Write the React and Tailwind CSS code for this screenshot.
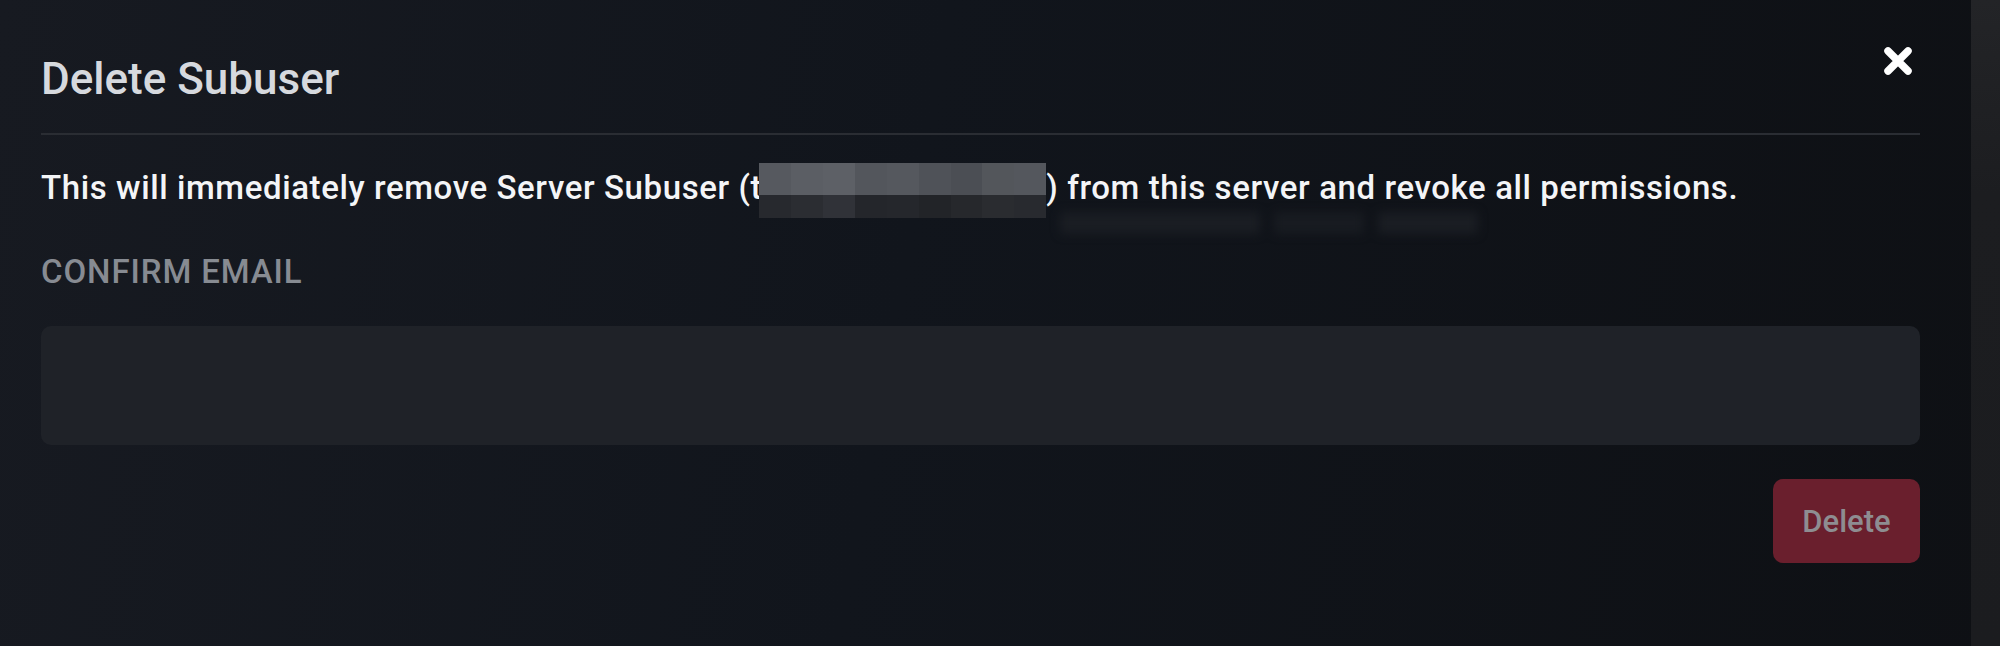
const MOSAIC_TOP = ['#56595f', '#5b5e64', '#5d6066', '#53565c', '#55585e', '#4f5258', '#4b4e54', '#53565b', '#54575d'];
const MOSAIC_BOTTOM = ['#27292e', '#2b2d32', '#303238', '#24262b', '#25272c', '#222428', '#26282c', '#2a2c30', '#282a2f'];

function Redacted() {
  return (
    <span className="inline-block h-[55px] w-[287px] -ml-[3px] -mt-[9px] -mb-[19px] align-baseline overflow-hidden">
      <span className="grid h-full grid-cols-9 grid-rows-[32px_23px]">
        {MOSAIC_TOP.map((c, i) => (
          <span key={'t' + i} className="block" style={{ backgroundColor: c }} />
        ))}
        {MOSAIC_BOTTOM.map((c, i) => (
          <span key={'b' + i} className="block" style={{ backgroundColor: c }} />
        ))}
      </span>
    </span>
  );
}

export default function App() {
  return (
    <div className="flex h-[646px] w-[2000px] overflow-hidden font-['Roboto',_'Liberation_Sans',_sans-serif] bg-[linear-gradient(100deg,#171a21_0%,#11151c_45%,#0e1014_100%)]">
      <div className="relative flex flex-1 flex-col pl-[41px] pr-[51px]">
        {/* faint blurred text from the page behind the modal */}
        <div className="pointer-events-none absolute left-[1060px] top-[212px] flex gap-[14px] blur-[5px]">
          <div className="h-[22px] w-[200px] rounded bg-[#1a1d23]" />
          <div className="h-[22px] w-[90px] rounded bg-[#181b21]" />
          <div className="h-[22px] w-[100px] rounded bg-[#1a1d23]" />
        </div>

        <div className="relative flex items-start justify-between pt-[46px]">
          <h2 className="mt-[11px] text-[44px] leading-none font-medium text-[#d6d9de]">Delete Subuser</h2>
          <button className="mr-[7px] text-white" aria-label="Close">
            <svg className="h-[30px] w-[30px]" viewBox="0 0 30 30" fill="none" stroke="currentColor" strokeWidth={7.5} strokeLinecap="round">
              <path d="M5 5l20 20M25 5L5 25" />
            </svg>
          </button>
        </div>

        <div className="relative mt-[32px] h-[2px] bg-[#2a2d33]" />

        <p className="relative mt-[36px] h-[31px] text-[33px] leading-none font-medium tracking-[0.6px] text-[#f4f5f7] whitespace-nowrap">
          This will immediately remove Server Subuser (t<Redacted />) from this server and revoke all permissions.
        </p>

        <label className="relative mt-[53px] text-[33px] leading-none font-medium tracking-[0.9px] text-[#878b92]">CONFIRM EMAIL</label>

        <input
          type="email"
          className="relative mt-[38px] h-[119px] w-full rounded-[10px] bg-[#1f2228] px-6 text-[31px] text-white outline-none"
        />

        <div className="relative mt-[34px] flex justify-end">
          <button
            disabled
            className="flex h-[84px] w-[147px] items-center justify-center rounded-[10px] bg-[#6a1f2d] text-[31px] leading-none font-medium text-[#8e8d91]"
          >
            Delete
          </button>
        </div>
      </div>
      <div className="w-[29px] bg-[linear-gradient(180deg,#232427_0%,#1c1d20_30%,#1b1c1f_100%)]" />
    </div>
  );
}
